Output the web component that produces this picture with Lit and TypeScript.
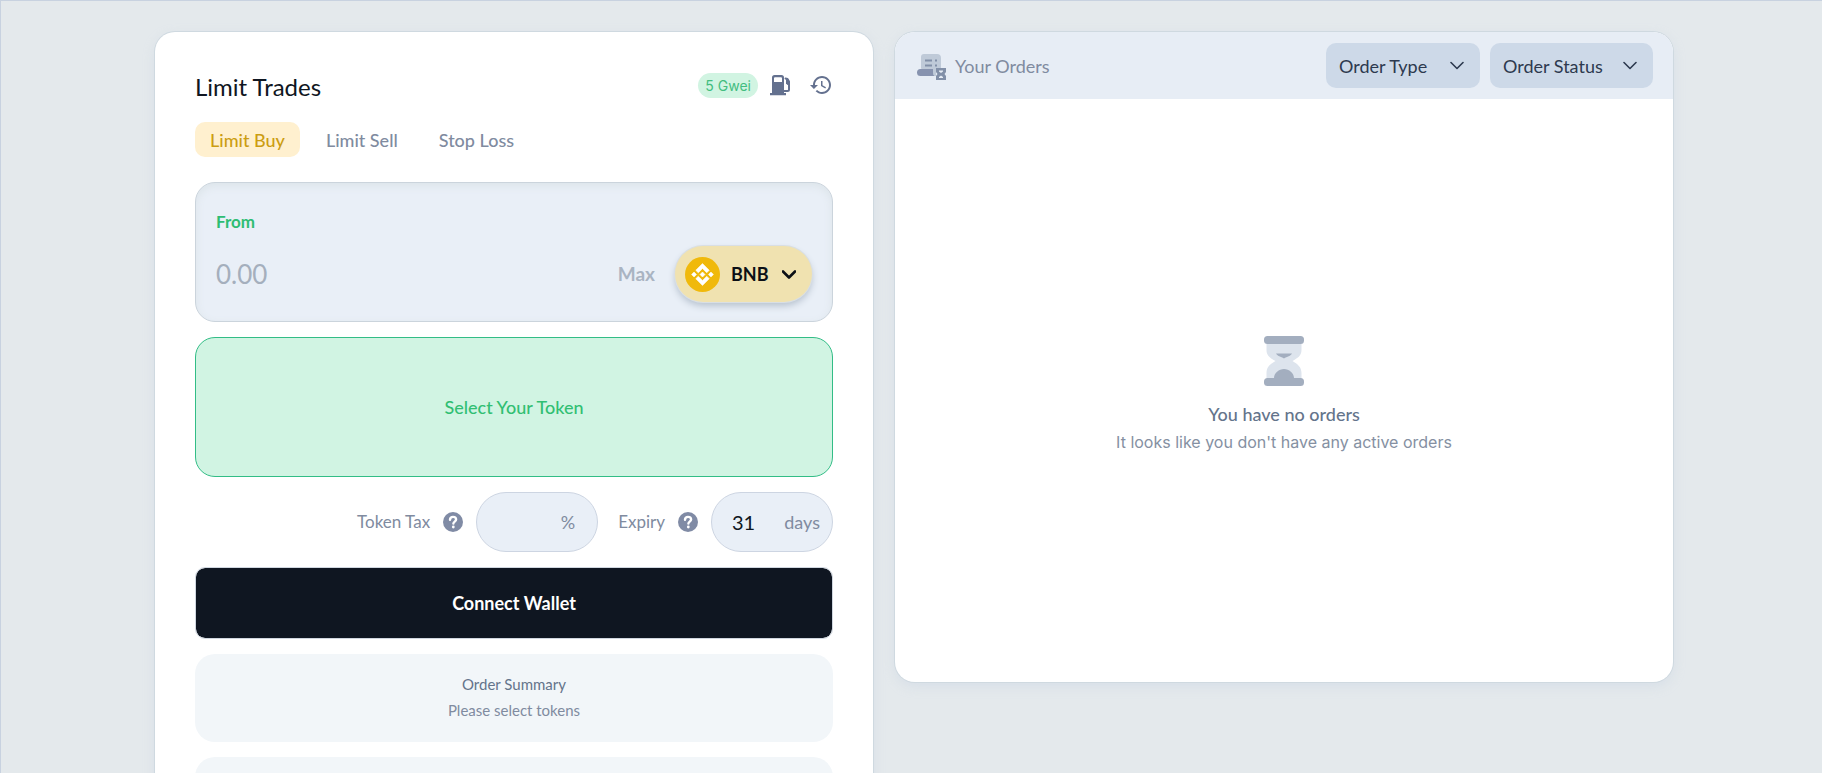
import { LitElement, html, css } from "lit";
import { customElement, state } from "lit/decorators.js";

const chevron = (width: number) => html`<svg class="chev" viewBox="0 0 14 9" aria-hidden="true">
  <path d="M1 1.500 7 7.500l6-6" fill="none" stroke="currentColor" stroke-width=${width} stroke-linecap="round" stroke-linejoin="round" />
</svg>`;

const help = html`<svg class="help" viewBox="0 0 20 20" aria-hidden="true">
  <circle cx="10" cy="10" r="10" fill="#808ba5" />
  <path d="M7 7.800C7 5.900 8.300 4.900 10 4.900s3.100 1 3.100 2.600c0 2-2.700 2.200-2.700 4.100" fill="none" stroke="#fff" stroke-width="2.400" stroke-linecap="round" />
  <circle cx="10.300" cy="15" r="1.400" fill="#fff" />
</svg>`;

@customElement("app-root")
export class AppRoot extends LitElement {
  @state() private tab = "Limit Buy";

  static styles = css`
    :host {
      display: block;
      box-sizing: border-box;
      height: 100vh;
      overflow-y: auto;
      scrollbar-width: none;
      background: #e4e9ec;
      border-top: 1px solid #c8d2e0;
      border-left: 1px solid #c8d2e0;
      font-family: Lato, "Liberation Sans", sans-serif;
      font-size: 18px;
      line-height: 24px;
      color: #808ba0;
    }
    *, *::before { box-sizing: border-box; }
    button, input, select { font: inherit; color: inherit; border: 0; margin: 0; padding: 0; background: none; }
    button, select { cursor: pointer; }
    h1, h2, p { margin: 0; font-weight: 400; }
    .page {
      display: grid;
      grid-template-columns: 718fr 778fr;
      gap: 22px;
      align-items: start;
      padding: 31px 149px 40px 154px;
    }
    .card {
      background: #fff;
      border-radius: 20px;
      box-shadow: 0 0 0 1px #cfd9e0, 0 4px 12px #c3cfe066;
      min-width: 0;
    }
    .trade { padding: 38px 40px 40px; display: flex; flex-direction: column; }
    .head { display: flex; align-items: flex-start; justify-content: space-between; height: 36px; }
    h1 { font-size: 24px; line-height: 34px; color: #0f1621; }
    .tools { display: flex; align-items: center; height: 30px; }
    .gwei {
      font-family: Inter, sans-serif;
      font-size: 14px;
      height: 25px;
      line-height: 25px;
      padding: 0 7px;
      border-radius: 13px;
      background: #d1f4e2;
      color: #43bd80;
      margin-right: 12px;
    }
    .icon { display: flex; color: #64718f; }
    .icon + .icon { margin-left: 17px; }
    .icon svg { width: 22px; height: 24px; }
    .icon .hist { width: 24px; }
    .tabs { display: flex; gap: 11px; margin: 16px 0 25px; }
    .tab { height: 35px; padding: 0 15px; border-radius: 10px; font-weight: 500; }
    .tab.on { background: #fff0cf; color: #cc9d12; }
    .from {
      height: 140px;
      padding: 27px 20px 16px;
      border: 1px solid #cbd4dc;
      border-radius: 20px;
      background: #e9eff7;
      box-shadow: inset 0 3px 8px #dce4e9;
    }
    .from label { display: block; font-size: 17px; font-weight: 700; color: #2ebd73; }
    .amount { display: flex; align-items: center; margin-top: 12px; height: 56px; }
    .amount input { flex: 1; min-width: 0; font-size: 26px; line-height: 32px; outline: 0; }
    .amount input::placeholder { color: #a5afbd; opacity: 1; }
    .max { color: #a9b4c2; font-weight: 700; margin-right: 20px; font-size: 19px; }
    .coin {
      display: flex;
      align-items: center;
      width: 137px;
      height: 56px;
      padding: 0 16px 0 10px;
      border-radius: 28px;
      background: #f0e2b0;
      color: #0c1016;
      font-weight: 700;
      box-shadow: 0 0 0 1px #d9dfe4, 0 4px 7px #b7c2cf;
    }
    .coin .logo { width: 35px; height: 35px; margin-right: 11px; }
    .chev { width: 14px; height: 9px; flex: none; }
    .coin .chev { margin-left: auto; }
    .select-token {
      height: 140px;
      margin-top: 15px;
      border: 1px solid #32bd86;
      border-radius: 20px;
      background: #d1f4e3;
      color: #31bf73;
      font-weight: 500;
    }
    .options { display: flex; justify-content: flex-end; align-items: center; margin: 15px 0; }
    .options label { margin-right: 13px; font-size: 17px; }
    .help { width: 20px; height: 20px; margin-right: 13px; display: block; }
    .field {
      display: flex;
      align-items: center;
      width: 122px;
      height: 60px;
      padding: 0 12px 0 20px;
      border: 1px solid #cdd5e2;
      border-radius: 30px;
      background: #e9eff7;
    }
    .field input { flex: 1; min-width: 0; width: 0; outline: 0; font-size: 20px; color: #0f1621; }
    .tax { margin-right: 20px; padding-right: 22px; }
    .connect {
      height: 72px;
      border-radius: 10px;
      border: 1px solid #d0d7e0;
      background: #0f1621;
      color: #fff;
      font-weight: 700;
      background-clip: padding-box;
    }
    .summary {
      min-height: 88px;
      margin-top: 15px;
      padding: 17px 20px;
      border-radius: 20px;
      background: #f2f6f9;
      text-align: center;
      font-size: 15px;
      line-height: 26px;
    }
    .summary h2 { font-size: 15px; line-height: 26px; color: #64748b; }
    .orders { display: flex; flex-direction: column; min-height: 650px; overflow: hidden; }
    .bar {
      display: flex;
      align-items: center;
      height: 67px;
      padding: 0 20px 0 21px;
      background: #e7edf5;
    }
    .bar .doc { width: 30px; height: 28px; margin: 3px 9px 0 0; }
    .bar h2 { font-size: 18px; line-height: 24px; flex: 1; }
    .filters { display: flex; gap: 10px; }
    .drop { display: grid; align-items: center; background: #cdd9e8; border-radius: 10px; color: #2d3a4f; height: 45px; width: 154px; }
    .drop.wide { width: 163px; }
    .drop select, .drop .chev { grid-area: 1 / 1; }
    .drop select { appearance: none; width: 100%; height: 45px; padding: 0 36px 0 13px; outline: 0; font-size: 18px; }
    .drop .chev { justify-self: end; margin-right: 16px; pointer-events: none; }
    .empty { flex: 1; display: flex; flex-direction: column; align-items: center; justify-content: center; padding-top: 10px; }
    .empty svg { width: 40px; height: 50px; margin-bottom: 14px; }
    .empty h2 { font-size: 18px; line-height: 28px; color: #64748b; font-weight: 500; }
    .empty p { font-family: Inter, sans-serif; font-size: 16px; line-height: 28px; color: #8590a2; }
  `;

  render() {
    return html`<main class="page">
      <section class="card trade">
        <div class="head">
          <h1>Limit Trades</h1>
          <div class="tools">
            <span class="gwei">5 Gwei</span>
            <button class="icon" aria-label="Gas price">
              <svg viewBox="0 0 22 24">
                <path fill="currentColor" fill-rule="evenodd" d="M4.500 2h7A2.500 2.500 0 0 1 14 4.500V20h2v2.200H0V20h2V4.500A2.500 2.500 0 0 1 4.500 2zM5 4.200a1 1 0 0 0-1 1V9h8V5.200a1 1 0 0 0-1-1z" />
                <path fill="none" stroke="currentColor" stroke-width="2" stroke-linejoin="round" stroke-linecap="round" d="M15.500 5.500 17.500 6l1.500 2.500v8c0 1-.6 1.500-1.500 1.500H14" />
                <path fill="currentColor" d="M16 6h2l1 2v4h-1.500L16 10.500z" />
              </svg>
            </button>
            <button class="icon" aria-label="History">
              <svg class="hist" viewBox="0 0 24 24"><path fill="currentColor" d="M13 3c-4.970 0-9 4.030-9 9H1l3.890 3.890.07.14L9 12H6c0-3.870 3.130-7 7-7s7 3.130 7 7-3.130 7-7 7c-1.930 0-3.680-.79-4.940-2.060l-1.420 1.420C8.270 19.990 10.510 21 13 21c4.970 0 9-4.030 9-9s-4.030-9-9-9zm-1 5v5l4.280 2.540.72-1.210-3.500-2.080V8H12z" /></svg>
            </button>
          </div>
        </div>
        <nav class="tabs">
          ${["Limit Buy", "Limit Sell", "Stop Loss"].map(
            (t) => html`<button class="tab ${t === this.tab ? "on" : ""}" @click=${() => (this.tab = t)}>${t}</button>`
          )}
        </nav>
        <div class="from">
          <label for="amount">From</label>
          <div class="amount">
            <input id="amount" placeholder="0.00" inputmode="decimal" />
            <button class="max">Max</button>
            <button class="coin">
              <svg class="logo" viewBox="0 0 32 32" aria-hidden="true">
                <circle cx="16" cy="16" r="16" fill="#f0b90b" />
                <path fill="#fff" stroke="#fff" stroke-width=".5" d="M12.116 14.404 16 10.520l3.886 3.886 2.260-2.260L16 6l-6.144 6.144zM6 16l2.260-2.260L10.520 16l-2.260 2.260zm6.116 1.596L16 21.480l3.886-3.886 2.260 2.259L16 26l-6.144-6.144zM21.480 16l2.260-2.260L26 16l-2.260 2.260zM13.700 16 16 13.700l2.300 2.300-2.300 2.300z" />
              </svg>
              <span>BNB</span>${chevron(2.6)}
            </button>
          </div>
        </div>
        <button class="select-token">Select Your Token</button>
        <div class="options">
          <label for="tax">Token Tax</label>${help}
          <div class="field tax"><input id="tax" inputmode="decimal" /><span>%</span></div>
          <label for="expiry">Expiry</label>${help}
          <div class="field"><input id="expiry" .value=${"31"} inputmode="numeric" /><span>days</span></div>
        </div>
        <button class="connect">Connect Wallet</button>
        <div class="summary">
          <h2>Order Summary</h2>
          <p>Please select tokens</p>
        </div>
        <div class="summary"></div>
      </section>
      <section class="card orders">
        <header class="bar">
          <svg class="doc" viewBox="0 0 30 28" aria-hidden="true">
            <path fill="#bfcad8" d="M8 1h13a4 4 0 0 1 4 4v10h-5v8H8l-3-8V4a3 3 0 0 1 3-3z" />
            <path stroke="#8290a8" stroke-width="2" d="M9 7.500h7M9 12.500h7M19 7.500h2M19 12.500h2" />
            <path fill="#8793af" d="M4.500 16H17v4a3 3 0 0 0 1.500 3h-14a3.500 3.500 0 0 1 0-7z" />
            <path fill="#8290a8" fill-rule="evenodd" d="M20 15h10v4l-1.500 2L30 23v4H20v-4l1.500-2L20 19zm3 2.500v1l2 1.500 2-1.500v-1zm2 5-2 1.500v1h4v-1z" />
          </svg>
          <h2>Your Orders</h2>
          <div class="filters">
            <div class="drop">
              <select aria-label="Order Type"><option>Order Type</option></select>${chevron(1.6)}
            </div>
            <div class="drop wide">
              <select aria-label="Order Status"><option>Order Status</option></select>${chevron(1.6)}
            </div>
          </div>
        </header>
        <div class="empty">
          <svg viewBox="0 0 40 50" aria-hidden="true">
            <path fill="#dde4ed" d="M2.500 6h35v8c0 6-4 8-9 11 5 3 9 6 9 12v7h-35v-7c0-6 4-9 9-12-5-3-9-5-9-11z" />
            <path fill="#a3aebf" d="M12 17.500h16c-1 2.500-5 3-8 5-3-2-7-2.500-8-5zM10 44v-2c0-5 5-9 10-9s10 4 10 9v2z" />
            <rect width="40" height="8" rx="3.500" fill="#a3aebf" />
            <rect y="42" width="40" height="8" rx="3.500" fill="#a3aebf" />
          </svg>
          <h2>You have no orders</h2>
          <p>It looks like you don't have any active orders</p>
        </div>
      </section>
    </main>`;
  }
}
